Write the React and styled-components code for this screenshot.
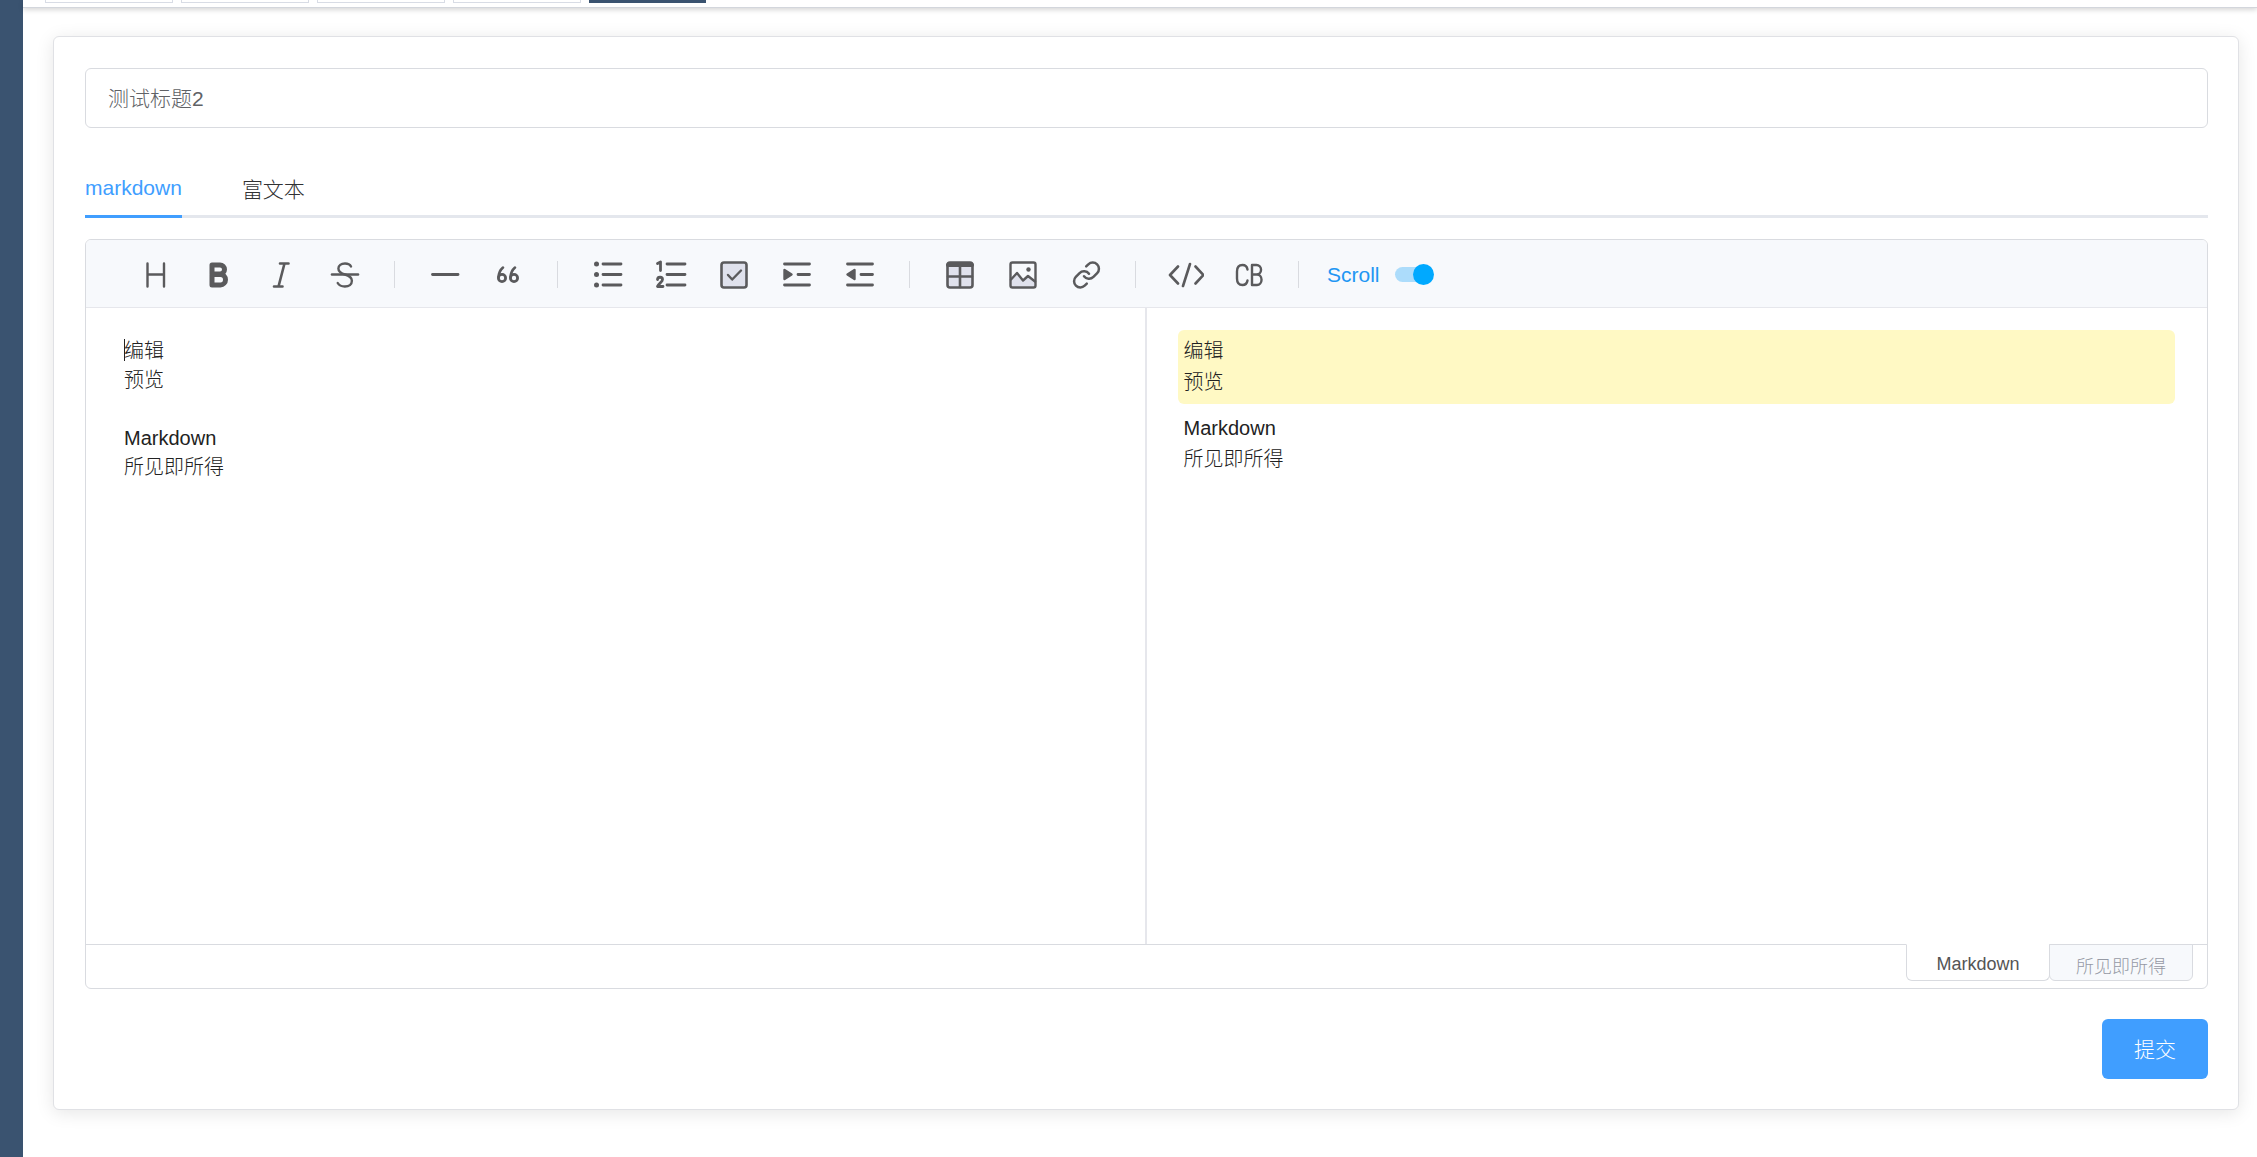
import React, { useState } from "react";
import styled, { createGlobalStyle } from "styled-components";

const INITIAL_TEXT = "编辑\n预览\n\nMarkdown\n所见即所得";

const icons = {
  heading: <path d="M9.500 6.500v23M26 6.500v23M9.500 17.500h16.500" />,
  bold: (
    <path
      d="M11 8h8a4.500 4.500 0 0 1 0 9h-8zM11 17.500h8.500a5 5.200 0 0 1 0 10.400h-8.500z"
      strokeWidth="5"
    />
  ),
  italic: <path d="M16 6.500h8.500M10 29.500h8.500M20.500 6.500l-6 23" strokeWidth="2.6" />,
  strike: (
    <>
      <path d="M24 9.500c-1-2-3.400-3-6-3-4 0-6.600 2-6.600 5 0 2.800 2.200 4.700 6.600 6 4.800 1.400 6.900 3.300 6.900 6.300 0 3.500-2.900 5.700-7 5.700-3.600 0-6-1.300-7.200-3.500" />
      <path d="M5 17.500h26" strokeWidth="2.6" />
    </>
  ),
  line: <path d="M5.500 17.500h25.500" strokeWidth="2.8" />,
  quote: (
    <>
      <circle cx="12" cy="21" r="3.600" strokeWidth="2.8" />
      <path d="M8.600 20c.2-4 1.800-7.200 4.400-9.400" strokeWidth="2.6" />
      <circle cx="24" cy="21" r="3.600" strokeWidth="2.8" />
      <path d="M20.600 20c.2-4 1.800-7.200 4.400-9.400" strokeWidth="2.6" />
    </>
  ),
  ul: (
    <>
      <path d="M13 7h18M13 17.500h18M13 28h18" strokeWidth="2.8" />
      <g fill="#5a5a5c" stroke="none">
        <circle cx="6.500" cy="7" r="2.500" />
        <circle cx="6.500" cy="17.500" r="2.500" />
        <circle cx="6.500" cy="28" r="2.500" />
      </g>
    </>
  ),
  ol: (
    <>
      <path d="M14 7h18M14 17.500h18M14 28h18" strokeWidth="2.8" />
      <path
        d="M4.500 6.500l3-1.500v8.500M4.500 22.500c.4-3.200 5-2.800 5 0 0 2.200-3.200 3.600-5 7h5.500"
        strokeWidth="2.8"
      />
    </>
  ),
  task: (
    <>
      <rect x="5.500" y="5.500" width="25" height="25" rx="2.500" fill="#dfe1ec" strokeWidth="2.6" />
      <path d="M12 18l4.200 4.500 8.800-9" />
    </>
  ),
  indent: (
    <>
      <path d="M5.500 7h25M19 17.500h11.500M5.500 28h25" strokeWidth="2.8" />
      <path d="M5.500 13v9l7-4.500z" fill="#5a5a5c" />
    </>
  ),
  outdent: (
    <>
      <path d="M5.500 7h25M19 17.500h11.500M5.500 28h25" strokeWidth="2.8" />
      <path d="M12.500 13v9l-7-4.500z" fill="#5a5a5c" />
    </>
  ),
  table: (
    <>
      <rect x="5.500" y="5.500" width="25" height="25" rx="2.500" fill="#dfe1ec" strokeWidth="2.6" />
      <path d="M6 8h24" strokeWidth="4" />
      <path d="M18 9v21M6 19.500h24" strokeWidth="2.6" />
    </>
  ),
  image: (
    <>
      <path d="M6 23.500l6-7 7 6.500 4.500-4 7 5v5.500h-24.500z" fill="#dfe1ec" stroke="none" />
      <rect x="5.500" y="5.500" width="25" height="25" rx="2" />
      <path d="M6 22.500l6-6.500 6 7.500 5-4.500 7 5.500" />
      <circle cx="23.500" cy="12.500" r="2.200" fill="#5a5a5c" stroke="none" />
    </>
  ),
  link: (
    <g transform="translate(3.500 3) scale(1.25)" strokeWidth="2">
      <path d="M10 13a5 5 0 0 0 7.540.540l3-3a5 5 0 0 0-7.070-7.070l-1.720 1.710" />
      <path d="M14 11a5 5 0 0 0-7.540-.540l-3 3a5 5 0 0 0 7.070 7.070l1.710-1.710" />
    </g>
  ),
  code: (
    <path
      d="M10 9.500l-8 8.500 8 8.500M27.500 9.500l8 8.500-8 8.500M22 7l-7 22"
      strokeWidth="2.600"
    />
  ),
  codeBlock: (
    <>
      <path d="M16.500 12.500c-.5-3-2.400-4.500-5-4.500-3.500 0-5.500 2.500-5.500 6.500v7c0 4 2 6.500 5.500 6.500 2.600 0 4.500-1.500 5-4.500" />
      <path d="M21 8h4.500a4.500 4.700 0 0 1 0 9.500h-4.500zM21 17.500h5a4.500 5.200 0 0 1 0 10.500h-5z" />
    </>
  ),
};

const toolGroups = [
  ["heading", "bold", "italic", "strike"],
  ["line", "quote"],
  ["ul", "ol", "task", "indent", "outdent"],
  ["table", "image", "link"],
  ["code", "codeBlock"],
];

const Icon = ({ name }) => (
  <svg
    width="36"
    height="36"
    viewBox="0 0 36 36"
    fill="none"
    stroke="#5a5a5c"
    strokeWidth="2.4"
    strokeLinecap="round"
    strokeLinejoin="round"
    aria-hidden="true"
  >
    {icons[name]}
  </svg>
);

const Toolbar = ({ scroll, onScrollChange }) => (
  <ToolbarContainer>
    {toolGroups.map((group) => (
      <ToolGroup key={group[0]}>
        {group.map((name) => (
          <ToolButton key={name} type="button" aria-label={name}>
            <Icon name={name} />
          </ToolButton>
        ))}
      </ToolGroup>
    ))}
    <ScrollLabel>
      Scroll
      <Switch type="checkbox" checked={scroll} onChange={onScrollChange} />
    </ScrollLabel>
  </ToolbarContainer>
);

const Preview = ({ text }) => (
  <PreviewPane>
    {text.split("\n\n").map((block, index) => (
      <Paragraph key={index} $highlight={index === 0}>
        {block}
      </Paragraph>
    ))}
  </PreviewPane>
);

export default function App() {
  const [title, setTitle] = useState("测试标题2");
  const [text, setText] = useState(INITIAL_TEXT);
  const [tab, setTab] = useState("markdown");
  const [mode, setMode] = useState("Markdown");
  const [scroll, setScroll] = useState(true);

  return (
    <>
      <GlobalStyle />
      <Page>
        <Sidebar />
        <Main>
          <TagsBar>
            <Tag />
            <Tag />
            <Tag />
            <Tag />
            <Tag $active />
          </TagsBar>
          <Card>
            <TitleInput
              aria-label="标题"
              value={title}
              onChange={(e) => setTitle(e.target.value)}
            />
            <Tabs>
              {["markdown", "富文本"].map((name) => (
                <Tab
                  key={name}
                  type="button"
                  $active={tab === name}
                  onClick={() => setTab(name)}
                >
                  {name}
                </Tab>
              ))}
            </Tabs>
            <Editor>
              <Toolbar scroll={scroll} onScrollChange={() => setScroll(!scroll)} />
              <Panes>
                <EditPane>
                  <TextArea
                    aria-label="Markdown"
                    spellCheck={false}
                    value={text}
                    onChange={(e) => setText(e.target.value)}
                  />
                  <Caret />
                </EditPane>
                <Preview text={text} />
              </Panes>
              <ModeBar>
                {["Markdown", "所见即所得"].map((name) => (
                  <ModeButton
                    key={name}
                    type="button"
                    $active={mode === name}
                    onClick={() => setMode(name)}
                  >
                    {name}
                  </ModeButton>
                ))}
              </ModeBar>
            </Editor>
            <Footer>
              <SubmitButton type="button">提交</SubmitButton>
            </Footer>
          </Card>
        </Main>
      </Page>
    </>
  );
}

const GlobalStyle = createGlobalStyle`
  * {
    box-sizing: border-box;
  }
  body {
    margin: 0;
    background: #fff;
  }
  body, button, input, textarea {
    font-family: "Liberation Sans", "Noto Sans CJK SC", sans-serif;
    font-weight: 300;
  }
`;

const Page = styled.div`
  display: flex;
  min-height: 100vh;
`;

const Sidebar = styled.aside`
  flex: none;
  width: 23px;
  background: #3a5370;
`;

const Main = styled.main`
  flex: 1;
  min-width: 0;
`;

const TagsBar = styled.nav`
  display: flex;
  gap: 8px;
  height: 8px;
  padding-left: 22px;
  border-bottom: 1px solid #d3d6dc;
  box-shadow: 0 2px 5px rgba(0, 0, 0, 0.16);
`;

const Tag = styled.span`
  width: ${(props) => (props.$active ? "117px" : "128px")};
  height: 3px;
  border: 1px solid ${(props) => (props.$active ? "#3a5370" : "#d8dce5")};
  border-top: none;
  background: ${(props) => (props.$active ? "#3a5370" : "#fff")};
`;

const Card = styled.section`
  margin: 28px 18px 0 30px;
  padding: 31px 30px 30px 31px;
  border: 1px solid #e0e1e5;
  border-radius: 6px;
  background: #fff;
  box-shadow: 0 3px 18px rgba(0, 0, 0, 0.1);
`;

const TitleInput = styled.input`
  display: block;
  width: 100%;
  height: 60px;
  padding: 0 22px 3px;
  border: 1px solid #d9dbe0;
  border-radius: 6px;
  outline: none;
  color: #606266;
  font-size: 21px;
`;

const Tabs = styled.div`
  display: flex;
  gap: 60px;
  margin: 30px 0 21px;
  box-shadow: inset 0 -3px #e4e7ed;
`;

const Tab = styled.button`
  height: 60px;
  padding: 2px 0 0;
  border: none;
  border-bottom: 3px solid ${(props) => (props.$active ? "#409eff" : "transparent")};
  background: none;
  color: ${(props) => (props.$active ? "#409eff" : "#303133")};
  font-size: 21px;
  cursor: pointer;
`;

const Editor = styled.div`
  display: flex;
  flex-direction: column;
  min-height: 750px;
  border: 1px solid #d9dbe0;
  border-radius: 6px;
`;

const ToolbarContainer = styled.div`
  display: flex;
  align-items: center;
  height: 68px;
  padding: 2px 38px 0;
  border-bottom: 1px solid #e6e7ec;
  border-radius: 5px 5px 0 0;
  background: #f7f9fc;
`;

const ToolGroup = styled.div`
  display: flex;
  align-items: center;

  &::after {
    content: "";
    width: 1px;
    height: 27px;
    margin: 0 18px;
    background: #d9dbe0;
  }
`;

const ToolButton = styled.button`
  display: flex;
  align-items: center;
  justify-content: center;
  width: 63px;
  height: 48px;
  padding: 0;
  border: none;
  background: none;
  cursor: pointer;
`;

const ScrollLabel = styled.label`
  display: flex;
  align-items: center;
  gap: 15px;
  padding-left: 10px;
  color: #2196f3;
  font-size: 21px;
`;

const Switch = styled.input`
  appearance: none;
  position: relative;
  width: 36px;
  height: 15px;
  margin: 0;
  border-radius: 8px;
  background: ${(props) => (props.checked ? "#acdcfb" : "#d6d8de")};

  &::after {
    content: "";
    position: absolute;
    top: -3px;
    left: ${(props) => (props.checked ? "18px" : "-3px")};
    width: 21px;
    height: 21px;
    border-radius: 50%;
    background: ${(props) => (props.checked ? "#00a9ff" : "#94979e")};
  }
`;

const Panes = styled.div`
  display: grid;
  grid-template-columns: 1fr 1fr;
  flex: 1;
`;

const EditPane = styled.div`
  position: relative;
  display: flex;
  border-right: 2px solid #e6e7ec;
`;

const TextArea = styled.textarea`
  flex: 1;
  min-width: 0;
  padding: 29px 38px;
  border: none;
  outline: none;
  resize: none;
  background: none;
  color: #222;
  font-size: 20px;
  line-height: 29px;
`;

const Caret = styled.span`
  position: absolute;
  top: 31px;
  left: 38px;
  width: 1px;
  height: 22px;
  background: #222;
`;

const PreviewPane = styled.div`
  padding: 22px 32px 22px 31px;
`;

const Paragraph = styled.p`
  margin: 0 0 3px;
  padding: 6px;
  border-radius: 6px;
  background: ${(props) => (props.$highlight ? "#fff9c4" : "none")};
  color: #222;
  font-size: 20px;
  line-height: 31px;
  white-space: pre-line;
`;

const ModeBar = styled.div`
  display: flex;
  justify-content: flex-end;
  height: 44px;
  padding-right: 14px;
  border-top: 1px solid #d9dbe0;
`;

const ModeButton = styled.button`
  width: 144px;
  height: 37px;
  margin: -1px 0 0 -1px;
  padding: 4px 0 0;
  border: 1px solid #d9dbe0;
  border-top-color: ${(props) => (props.$active ? "#fff" : "#d9dbe0")};
  border-radius: 0 0 6px 6px;
  background: ${(props) => (props.$active ? "#fff" : "#f7f9fc")};
  color: ${(props) => (props.$active ? "#555" : "#969aa5")};
  font-size: 18px;
  cursor: pointer;
`;

const Footer = styled.div`
  display: flex;
  justify-content: flex-end;
  margin-top: 30px;
`;

const SubmitButton = styled.button`
  height: 60px;
  padding: 0 32px 3px;
  border: none;
  border-radius: 6px;
  background: #409eff;
  color: #fff;
  font-size: 21px;
  cursor: pointer;
`;
